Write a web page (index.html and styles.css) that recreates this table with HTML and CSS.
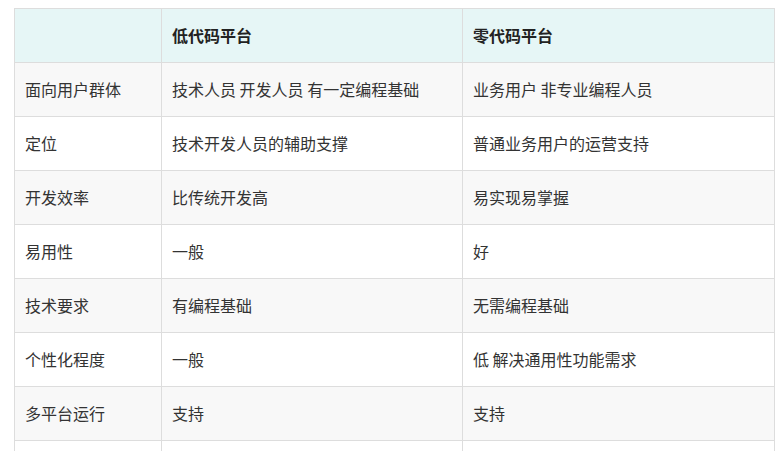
FILE: index.html
```html
<!DOCTYPE html>
<html lang="zh-CN">
<head>
<meta charset="utf-8">
<title>低代码与零代码平台对比</title>
<link rel="stylesheet" href="styles.css">
</head>
<body>
<div class="wrap">
<table class="cmp">
  <colgroup>
    <col class="c1"><col class="c2"><col class="c3">
  </colgroup>
  <thead>
    <tr><th></th><th>低代码平台</th><th>零代码平台</th></tr>
  </thead>
  <tbody>
    <tr class="alt"><td>面向用户群体</td><td>技术人员 开发人员 有一定编程基础</td><td>业务用户 非专业编程人员</td></tr>
    <tr><td>定位</td><td>技术开发人员的辅助支撑</td><td>普通业务用户的运营支持</td></tr>
    <tr class="alt"><td>开发效率</td><td>比传统开发高</td><td>易实现易掌握</td></tr>
    <tr><td>易用性</td><td>一般</td><td>好</td></tr>
    <tr class="alt"><td>技术要求</td><td>有编程基础</td><td>无需编程基础</td></tr>
    <tr><td>个性化程度</td><td>一般</td><td>低 解决通用性功能需求</td></tr>
    <tr class="alt"><td>多平台运行</td><td>支持</td><td>支持</td></tr>
    <tr><td>&nbsp;</td><td>&nbsp;</td><td>&nbsp;</td></tr>
  </tbody>
</table>
</div>
</body>
</html>
```

FILE: styles.css
```css
html, body {
  margin: 0;
  padding: 0;
  background: #ffffff;
}
body {
  font-family: "Noto Sans CJK SC", "Noto Sans", sans-serif;
  color: #333333;
  overflow: hidden;
}
.wrap {
  padding: 8px 9px 0 14px;
}
.cmp {
  border-collapse: collapse;
  table-layout: fixed;
  width: 760px;
  font-size: 16px;
}
.c1 { width: 147px; }
.c2 { width: 301px; }
.c3 { width: 312px; }
.cmp th,
.cmp td {
  border: 1px solid #dddddd;
  padding: 15px 10px;
  line-height: 23px;
  text-align: left;
  white-space: nowrap;
  vertical-align: middle;
}
.cmp th {
  background: #e6f6f6;
  font-weight: bold;
  color: #222222;
}
.cmp tr.alt td {
  background: #f8f8f8;
}
```
